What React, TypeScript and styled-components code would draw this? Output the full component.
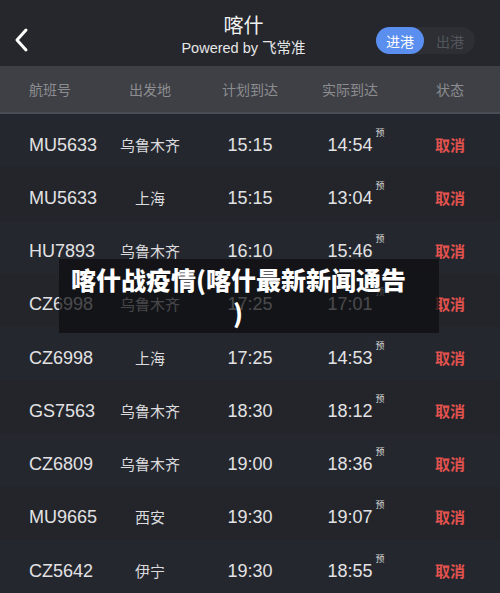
import React from "react";
import styled, { createGlobalStyle } from "styled-components";

const Global = createGlobalStyle`
  html, body { margin: 0; padding: 0; background: #24262d; }
  body { font-family: "Liberation Sans", "Noto Sans CJK SC", sans-serif; }
  * { box-sizing: border-box; }
`;

const Page = styled.div`
  position: relative;
  width: 500px;
  height: 593px;
  overflow: hidden;
  background: #24262d;
`;

const Header = styled.div`
  height: 66px;
  background: #25272d;
  display: grid;
  grid-template-columns: 1fr auto 1fr;
  align-items: start;
  padding: 0 25px 0 12px;
`;

const Back = styled.div`
  display: flex;
  align-items: center;
  margin-top: 27px;
`;

const TitleBlock = styled.div`
  display: flex;
  flex-direction: column;
  align-items: center;
  color: #f2f2f2;
  padding-top: 14px;
`;

const Title = styled.div`
  font-size: 20px;
  line-height: 24px;
`;

const Sub = styled.div`
  font-size: 14.5px;
  line-height: 20px;
  color: #e6e6e6;
`;

const Toggle = styled.div`
  justify-self: end;
  display: flex;
  width: 99px;
  height: 27px;
  border-radius: 14px;
  background: #2d2f35;
  margin-top: 27px;
`;

const ToggleItem = styled.div<{ $active?: boolean }>`
  width: 48px;
  height: 27px;
  border-radius: 14px;
  display: flex;
  align-items: center;
  justify-content: center;
  font-size: 14px;
  color: ${(p) => (p.$active ? "#ffffff" : "#54565c")};
  background: ${(p) => (p.$active ? "#5a8ff0" : "transparent")};
  margin-left: ${(p) => (p.$active ? "0" : "2px")};
`;

const ColHead = styled.div`
  height: 48px;
  background: #3f4045;
  border-bottom: 2px solid #4a4d55;
  display: grid;
  grid-template-columns: 100px 100px 100px 100px 100px;
  align-items: center;
  font-size: 14px;
  color: #8c8d91;
`;

const Cell = styled.div<{ $left?: boolean }>`
  text-align: ${(p) => (p.$left ? "left" : "center")};
  padding-left: ${(p) => (p.$left ? "29px" : "0")};
`;

const Row = styled.div<{ $alt?: boolean }>`
  height: 53.25px;
  padding-top: 9px;
  display: grid;
  grid-template-columns: 100px 100px 100px 100px 100px;
  align-items: center;
  background: ${(p) => (p.$alt ? "#23252b" : "#25272e")};
  color: #e2e2e4;
`;

const Flight = styled(Cell)`
  font-size: 18px;
`;

const City = styled(Cell)`
  font-size: 15px;
  color: #dcdcde;
  margin-top: -2px;
`;

const Time = styled(Cell)`
  font-size: 18px;
`;

const Actual = styled.div`
  position: relative;
  justify-self: center;
  font-size: 18px;
`;

const Pre = styled.span`
  position: absolute;
  right: -12px;
  top: -9px;
  font-size: 9px;
  color: #d8d8d8;
`;

const Status = styled(Cell)`
  font-size: 15px;
  color: #e0524d;
  font-weight: 600;
  margin-top: -2px;
`;

const Overlay = styled.div`
  position: absolute;
  left: 59px;
  top: 259px;
  width: 380px;
  height: 74px;
  background: rgba(14, 14, 16, 0.72);
  color: #ffffff;
  font-weight: 900;
  font-size: 25px;
  line-height: 33px;
  text-align: center;
  white-space: nowrap;
  padding: 4px 34px 0 12px;
  font-family: "Noto Sans CJK SC", "Liberation Sans", sans-serif;
`;

const rows = [
  ["MU5633", "乌鲁木齐", "15:15", "14:54"],
  ["MU5633", "上海", "15:15", "13:04"],
  ["HU7893", "乌鲁木齐", "16:10", "15:46"],
  ["CZ6998", "乌鲁木齐", "17:25", "17:01"],
  ["CZ6998", "上海", "17:25", "14:53"],
  ["GS7563", "乌鲁木齐", "18:30", "18:12"],
  ["CZ6809", "乌鲁木齐", "19:00", "18:36"],
  ["MU9665", "西安", "19:30", "19:07"],
  ["CZ5642", "伊宁", "19:30", "18:55"],
];

export default function App() {
  return (
    <Page>
      <Global />
      <Header>
        <Back>
          <svg width="20" height="26" viewBox="0 0 20 26">
            <path d="M14 3 L5 13 L14 23" stroke="#ffffff" strokeWidth="3" fill="none" strokeLinecap="round" strokeLinejoin="round" />
          </svg>
        </Back>
        <TitleBlock>
          <Title>喀什</Title>
          <Sub>Powered by 飞常准</Sub>
        </TitleBlock>
        <Toggle>
          <ToggleItem $active>进港</ToggleItem>
          <ToggleItem>出港</ToggleItem>
        </Toggle>
      </Header>
      <ColHead>
        <Cell $left>航班号</Cell>
        <Cell>出发地</Cell>
        <Cell>计划到达</Cell>
        <Cell>实际到达</Cell>
        <Cell>状态</Cell>
      </ColHead>
      {rows.map((r, i) => (
        <Row key={i} $alt={i % 2 === 1}>
          <Flight $left>{r[0]}</Flight>
          <City>{r[1]}</City>
          <Time>{r[2]}</Time>
          <Actual>
            {r[3]}
            <Pre>预</Pre>
          </Actual>
          <Status>取消</Status>
        </Row>
      ))}
      <Overlay>
        喀什战疫情(喀什最新新闻通告
        <br />)
      </Overlay>
    </Page>
  );
}
